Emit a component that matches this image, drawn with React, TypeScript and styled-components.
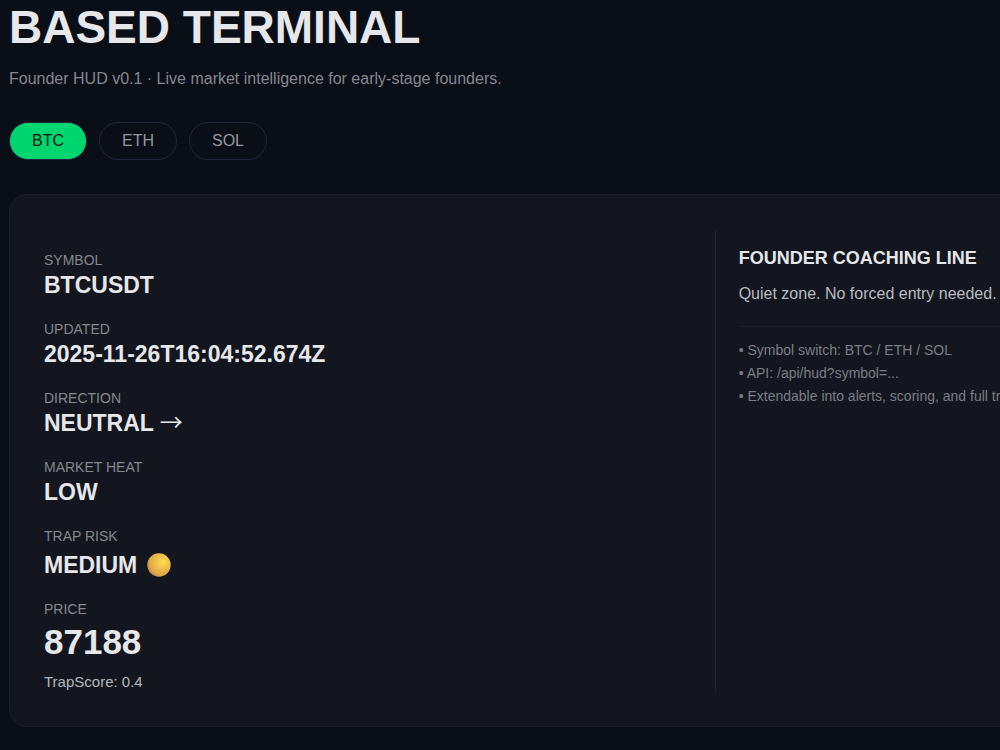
import React, { useState } from "react";
import styled, { createGlobalStyle } from "styled-components";

const GlobalStyle = createGlobalStyle`
  * { box-sizing: border-box; }
  body {
    margin: 0;
    background: #0a0e17;
    color: #e6e7ea;
    font-family: "Liberation Sans", Arial, sans-serif;
    overflow-x: hidden;
  }
  h1, h2, p, dl, dt, dd, ul { margin: 0; padding: 0; }
`;

const Page = styled.main`
  min-height: 100vh;
  padding: 0 9px 23px;
  overflow: hidden;
`;

const Title = styled.h1`
  font-size: 46px;
  line-height: 54px;
  font-weight: 700;
`;

const Subtitle = styled.p`
  margin-top: 13px;
  font-size: 16px;
  line-height: 24px;
  color: #85888f;
`;

const Switcher = styled.nav`
  display: flex;
  gap: 12px;
  margin: 31px 0 34px;
`;

const SymbolButton = styled.button<{ $active: boolean }>`
  height: 38px;
  padding: 0 22px;
  border: 1px solid #23263a;
  border-radius: 19px;
  background: ${(p) => (p.$active ? "#00d66f" : "transparent")};
  color: ${(p) => (p.$active ? "#07140f" : "#9497a0")};
  font-family: inherit;
  font-size: 16px;
  line-height: 20px;
  cursor: pointer;
`;

const Card = styled.section`
  display: grid;
  grid-template-columns: minmax(0, 2fr) minmax(0, 1fr);
  min-width: 1076px;
  padding: 35px 34px 34px;
  border: 1px solid #1c2029;
  border-radius: 18px;
  background: #13161e;
`;

const Stats = styled.dl`
  display: flex;
  flex-direction: column;
  gap: 21px;
  padding-top: 21px;
`;

const Stat = styled.div`
  display: flex;
  flex-direction: column;
  gap: 2px;
`;

const Label = styled.dt`
  font-size: 14px;
  line-height: 18px;
  color: #85888f;
`;

const Value = styled.dd`
  font-size: 23px;
  line-height: 28px;
  font-weight: 700;
`;

const RiskValue = styled(Value)`
  display: flex;
  align-items: center;
  gap: 10px;
  padding-top: 4px;
`;

const Arrow = styled.span`
  font-family: "Noto Sans CJK SC", sans-serif;
  font-weight: 400;
  line-height: 20px;
`;

const Price = styled(Value)`
  font-size: 35px;
  line-height: 44px;
`;

const Score = styled.dd`
  margin-top: 6px;
  font-size: 15px;
  line-height: 20px;
  color: #b4b6bb;
`;

const Coaching = styled.aside`
  padding: 16px 0 0 23px;
  border-left: 1px solid #20242d;
`;

const CoachingTitle = styled.h2`
  font-size: 18px;
  line-height: 24px;
  font-weight: 700;
`;

const CoachingLine = styled.p`
  margin-top: 12px;
  font-size: 16px;
  line-height: 24px;
  color: #b9bbc0;
`;

const Notes = styled.ul`
  margin-top: 20px;
  padding-top: 12px;
  border-top: 1px solid #1b1f28;
  list-style: none;
  font-size: 14px;
  line-height: 23px;
  color: #7b7e86;
  white-space: nowrap;
`;

const RiskDot = () => (
  <svg width="24" height="24" viewBox="0 0 24 24" aria-hidden="true">
    <defs>
      <radialGradient id="risk" cx="0.66" cy="0.36" r="0.7">
        <stop offset="0" stopColor="#ffdc50" />
        <stop offset="0.45" stopColor="#efbe4a" />
        <stop offset="0.85" stopColor="#dda548" />
        <stop offset="1" stopColor="#cc8450" />
      </radialGradient>
    </defs>
    <circle cx="12" cy="12" r="11.7" fill="url(#risk)" />
  </svg>
);

const symbols = ["BTC", "ETH", "SOL"];

export default function App() {
  const [symbol, setSymbol] = useState("BTC");
  return (
    <>
      <GlobalStyle />
      <Page>
        <Title>BASED TERMINAL</Title>
        <Subtitle>
          Founder HUD v0.1 · Live market intelligence for early-stage founders.
        </Subtitle>
        <Switcher aria-label="Symbol">
          {symbols.map((s) => (
            <SymbolButton
              key={s}
              type="button"
              $active={s === symbol}
              aria-pressed={s === symbol}
              onClick={() => setSymbol(s)}
            >
              {s}
            </SymbolButton>
          ))}
        </Switcher>
        <Card>
          <Stats>
            <Stat>
              <Label>SYMBOL</Label>
              <Value>{symbol}USDT</Value>
            </Stat>
            <Stat>
              <Label>UPDATED</Label>
              <Value>2025-11-26T16:04:52.674Z</Value>
            </Stat>
            <Stat>
              <Label>DIRECTION</Label>
              <Value>
                NEUTRAL <Arrow>→</Arrow>
              </Value>
            </Stat>
            <Stat>
              <Label>MARKET HEAT</Label>
              <Value>LOW</Value>
            </Stat>
            <Stat>
              <Label>TRAP RISK</Label>
              <RiskValue>
                MEDIUM <RiskDot />
              </RiskValue>
            </Stat>
            <Stat>
              <Label>PRICE</Label>
              <Price>87188</Price>
              <Score>TrapScore: 0.4</Score>
            </Stat>
          </Stats>
          <Coaching>
            <CoachingTitle>FOUNDER COACHING LINE</CoachingTitle>
            <CoachingLine>Quiet zone. No forced entry needed.</CoachingLine>
            <Notes>
              <li>• Symbol switch: BTC / ETH / SOL</li>
              <li>• API: /api/hud?symbol=...</li>
              <li>• Extendable into alerts, scoring, and full trading</li>
            </Notes>
          </Coaching>
        </Card>
      </Page>
    </>
  );
}
